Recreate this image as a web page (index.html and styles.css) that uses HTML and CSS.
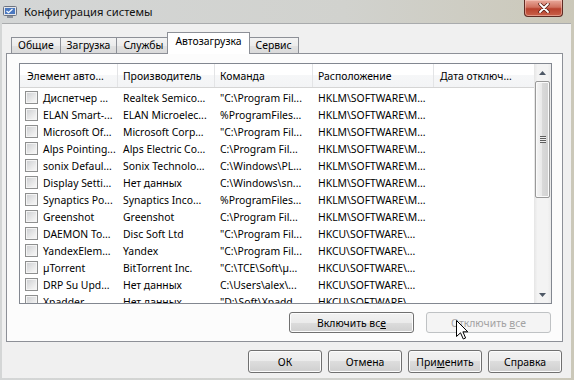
FILE: index.html
```html
<!DOCTYPE html>
<html lang="ru">

<head>
  <meta charset="UTF-8">
  <title>Конфигурация системы</title>
  <link rel="stylesheet" href="styles.css">
</head>

<body>
  <div class="window">
    <div class="titlebar">
      <svg class="titlebar__icon" width="14" height="14" viewBox="0 0 14 14">
        <rect x="0.5" y="1.5" width="13" height="9" rx="1" fill="#e4e6ea" stroke="#6d7380" />
        <rect x="2" y="3" width="10" height="6" fill="#4a78c0" />
        <path d="M3.5 6 L5.5 7.8 L9.5 4" fill="none" stroke="#ffffff" stroke-width="1.2" />
        <rect x="4" y="11" width="6" height="2" fill="#8a909a" />
      </svg>
      <span class="titlebar__text">Конфигурация системы</span>
      <div class="titlebar__close">
        <svg width="12" height="10" viewBox="0 0 12 10">
          <path d="M2 1 L10 9 M10 1 L2 9" stroke="#5a1e16" stroke-width="3.4" stroke-linecap="round" />
          <path d="M2 1 L10 9 M10 1 L2 9" stroke="#ffffff" stroke-width="1.8" stroke-linecap="round" />
        </svg>
      </div>
    </div>

    <div class="client">
      <div class="tabs">
        <div class="tab">Общие</div>
        <div class="tab">Загрузка</div>
        <div class="tab">Службы</div>
        <div class="tab tab--active">Автозагрузка</div>
        <div class="tab">Сервис</div>
      </div>

      <div class="tab-page">
        <div class="listview">
          <div class="listview__main">
            <div class="listview__header">
              <div class="col col--name">Элемент авто...</div>
              <div class="col col--maker">Производитель</div>
              <div class="col col--cmd">Команда</div>
              <div class="col col--place">Расположение</div>
              <div class="col col--date">Дата отключ...</div>
            </div>
            <div class="listview__rows">
              <div class="row">
                <div class="col col--name"><span class="check"></span>Диспетчер ...</div>
                <div class="col col--maker">Realtek Semico...</div>
                <div class="col col--cmd">"C:\Program Fil...</div>
                <div class="col col--place">HKLM\SOFTWARE\M...</div>
              </div>
              <div class="row">
                <div class="col col--name"><span class="check"></span>ELAN Smart-...</div>
                <div class="col col--maker">ELAN Microelec...</div>
                <div class="col col--cmd">%ProgramFiles...</div>
                <div class="col col--place">HKLM\SOFTWARE\M...</div>
              </div>
              <div class="row">
                <div class="col col--name"><span class="check"></span>Microsoft Of...</div>
                <div class="col col--maker">Microsoft Corp...</div>
                <div class="col col--cmd">"C:\Program Fil...</div>
                <div class="col col--place">HKLM\SOFTWARE\M...</div>
              </div>
              <div class="row">
                <div class="col col--name"><span class="check"></span>Alps Pointing...</div>
                <div class="col col--maker">Alps Electric Co...</div>
                <div class="col col--cmd">C:\Program Fil...</div>
                <div class="col col--place">HKLM\SOFTWARE\M...</div>
              </div>
              <div class="row">
                <div class="col col--name"><span class="check"></span>sonix Defaul...</div>
                <div class="col col--maker">Sonix Technolo...</div>
                <div class="col col--cmd">C:\Windows\PL...</div>
                <div class="col col--place">HKLM\SOFTWARE\M...</div>
              </div>
              <div class="row">
                <div class="col col--name"><span class="check"></span>Display Setti...</div>
                <div class="col col--maker">Нет данных</div>
                <div class="col col--cmd">C:\Windows\sn...</div>
                <div class="col col--place">HKLM\SOFTWARE\M...</div>
              </div>
              <div class="row">
                <div class="col col--name"><span class="check"></span>Synaptics Po...</div>
                <div class="col col--maker">Synaptics Inco...</div>
                <div class="col col--cmd">%ProgramFiles...</div>
                <div class="col col--place">HKLM\SOFTWARE\M...</div>
              </div>
              <div class="row">
                <div class="col col--name"><span class="check"></span>Greenshot</div>
                <div class="col col--maker">Greenshot</div>
                <div class="col col--cmd">C:\Program Fil...</div>
                <div class="col col--place">HKLM\SOFTWARE\M...</div>
              </div>
              <div class="row">
                <div class="col col--name"><span class="check"></span>DAEMON To...</div>
                <div class="col col--maker">Disc Soft Ltd</div>
                <div class="col col--cmd">"C:\Program Fil...</div>
                <div class="col col--place">HKCU\SOFTWARE\...</div>
              </div>
              <div class="row">
                <div class="col col--name"><span class="check"></span>YandexElem...</div>
                <div class="col col--maker">Yandex</div>
                <div class="col col--cmd">"C:\Program Fil...</div>
                <div class="col col--place">HKCU\SOFTWARE\...</div>
              </div>
              <div class="row">
                <div class="col col--name"><span class="check"></span>µTorrent</div>
                <div class="col col--maker">BitTorrent Inc.</div>
                <div class="col col--cmd">"C:\TCE\Soft\µ...</div>
                <div class="col col--place">HKCU\SOFTWARE\...</div>
              </div>
              <div class="row">
                <div class="col col--name"><span class="check"></span>DRP Su Upd...</div>
                <div class="col col--maker">Нет данных</div>
                <div class="col col--cmd">C:\Users\alex\...</div>
                <div class="col col--place">HKCU\SOFTWARE\...</div>
              </div>
              <div class="row">
                <div class="col col--name"><span class="check"></span>Xpadder</div>
                <div class="col col--maker">Нет данных</div>
                <div class="col col--cmd">"D:\Soft\Xpadd...</div>
                <div class="col col--place">HKCU\SOFTWARE\...</div>
              </div>
            </div>
          </div>

          <div class="scrollbar">
            <div class="scrollbar__arrow">
              <svg width="7" height="4" viewBox="0 0 7 4"><path d="M0 4 L3.5 0 L7 4 Z" fill="#4e5866" /></svg>
            </div>
            <div class="scrollbar__track">
              <div class="scrollbar__thumb">
                <span class="scrollbar__grip"></span>
              </div>
            </div>
            <div class="scrollbar__arrow">
              <svg width="7" height="4" viewBox="0 0 7 4"><path d="M0 0 L7 0 L3.5 4 Z" fill="#4e5866" /></svg>
            </div>
          </div>
        </div>

        <div class="page-buttons">
          <button class="btn btn--wide">Включить вс<u>е</u></button>
          <button class="btn btn--wide btn--disabled">Отключить <u>в</u>се</button>
        </div>
      </div>

      <div class="dialog-buttons">
        <button class="btn">ОК</button>
        <button class="btn">Отмена</button>
        <button class="btn">При<u>м</u>енить</button>
        <button class="btn">Справка</button>
      </div>
    </div>

    <svg class="cursor" width="13" height="20" viewBox="0 0 13 20">
      <path d="M0.5 0.5 L0.5 16.5 L4.5 12.8 L7.3 19 L9.6 18 L6.9 11.8 L11.8 11.8 Z" fill="#ffffff" stroke="#000000" stroke-width="1" stroke-linejoin="miter" />
    </svg>
  </div>
</body>

</html>
```

FILE: styles.css
```css
* {
  box-sizing: border-box;
}

html,
body {
  margin: 0;
  padding: 0;
}

body {
  width: 574px;
  height: 380px;
  overflow: hidden;
  font-family: "Noto Sans", "Open Sans", sans-serif;
  font-size: 10.4px;
  color: #000;
}

.window {
  position: relative;
  display: flex;
  flex-direction: column;
  width: 574px;
  height: 380px;
  padding: 0 3px 3px 2px;
  background: linear-gradient(to right, #d4d6d6, #d1d2ce 60%, #cbc8b9);
}

/* title bar */
.titlebar {
  display: flex;
  align-items: center;
  height: 23px;
  flex-shrink: 0;
}

.titlebar__icon {
  margin: 0 7px 0 1px;
}

.titlebar__text {
  font-size: 11.2px;
  color: #111;
  margin-top: -1px;
}

.titlebar__close {
  display: flex;
  align-items: center;
  justify-content: center;
  align-self: flex-start;
  margin-left: auto;
  margin-right: 8px;
  width: 39px;
  height: 17px;
  border: 1px solid #5e2a22;
  border-top: none;
  border-radius: 0 0 4px 4px;
  background: linear-gradient(to bottom, #e9a99b, #d0715f 45%, #b8412d 55%, #c9614a);
  box-shadow: inset 0 0 0 1px rgba(255, 220, 210, 0.45);
}

/* client */
.client {
  flex: 1;
  display: flex;
  flex-direction: column;
  padding: 8px 8px 5px 4px;
  background: #f0f0f0;
  border-top: 1px solid #a9abad;
}

/* tabs */
.tabs {
  display: flex;
  align-items: flex-end;
  height: 21px;
  padding-left: 5px;
  flex-shrink: 0;
}

.tab {
  height: 16px;
  line-height: 14px;
  padding: 0 6px;
  border: 1px solid #8d9097;
  border-bottom: none;
  margin-right: -1px;
  background: linear-gradient(to bottom, #f3f3f3, #ececec 50%, #e2e2e2 50%, #dadada);
  color: #000;
}

.tab--active {
  position: relative;
  z-index: 1;
  height: 22px;
  line-height: 17px;
  margin: 0 -1px -1px -2px;
  padding: 0 7px;
  background: #fff;
}

/* tab page */
.tab-page {
  display: flex;
  flex-direction: column;
  height: 289px;
  padding: 9px 10px 8px 12px;
  border: 1px solid #8d9097;
  background: #fcfcfc;
  flex-shrink: 0;
}

/* list view */
.listview {
  display: flex;
  height: 241px;
  border: 1px solid #828790;
  background: #fff;
  overflow: hidden;
}

.listview__main {
  flex: 1;
  overflow: hidden;
}

.listview__header {
  display: flex;
  height: 24px;
  align-items: center;
  background: linear-gradient(to bottom, #ffffff, #ffffff 50%, #f6f7f8 50%, #f3f4f6);
  border-bottom: 1px solid #d5d5d5;
}

.listview__header .col {
  height: 100%;
  line-height: 24px;
  padding-left: 7px;
  border-right: 1px solid #e3e4e6;
}

.listview__header .col--maker,
.listview__header .col--cmd,
.listview__header .col--place {
  padding-left: 5px;
}

.listview__header .col--date {
  padding-left: 6px;
  border-right: none;
}

.listview__rows {
  padding-top: 1px;
}

.row {
  display: flex;
  height: 17px;
  align-items: center;
}

.col {
  white-space: nowrap;
  overflow: hidden;
  padding-left: 5px;
}

.col--name {
  display: flex;
  align-items: center;
  width: 98px;
}

.col--maker {
  width: 97px;
}

.col--cmd {
  width: 98px;
}

.col--place {
  width: 121px;
}

.col--date {
  flex: 1;
}

.check {
  flex-shrink: 0;
  width: 13px;
  height: 13px;
  margin-right: 5px;
  border: 1px solid #8e8f8f;
  background: linear-gradient(135deg, #cbcdd0, #eeeeee 70%, #f8f8f8);
  box-shadow: inset 0 0 0 1px #f4f4f4;
}

/* scrollbar */
.scrollbar {
  display: flex;
  flex-direction: column;
  width: 17px;
  flex-shrink: 0;
  background: linear-gradient(to right, #e5e5e5, #f3f3f3 20%, #f3f3f3 80%, #eaeaea);
}

.scrollbar__arrow {
  display: flex;
  align-items: center;
  justify-content: center;
  height: 17px;
  flex-shrink: 0;
}

.scrollbar__track {
  flex: 1;
}

.scrollbar__thumb {
  display: flex;
  align-items: center;
  justify-content: center;
  height: 117px;
  margin: 0 1px;
  border: 1px solid #999;
  border-radius: 2px;
  background: linear-gradient(to right, #f4f4f4, #e8e8e8 50%, #d9d9d9 50%, #d1d1d1);
  box-shadow: inset 0 0 0 1px #fafafa;
}

.scrollbar__grip {
  width: 6px;
  height: 7px;
  background: repeating-linear-gradient(to bottom, #5d5d5d 0, #5d5d5d 1px, #eeeeee 1px, #eeeeee 2px);
}

/* buttons */
.page-buttons {
  display: flex;
  justify-content: flex-end;
  gap: 12px;
  margin-top: 8px;
  margin-right: 1px;
}

.dialog-buttons {
  display: flex;
  justify-content: flex-end;
  gap: 6px;
  margin-top: 8px;
  margin-right: 1px;
}

.btn {
  width: 74px;
  height: 23px;
  padding: 0;
  border: 1px solid #707070;
  border-radius: 3px;
  background: linear-gradient(to bottom, #f2f2f2, #ebebeb 50%, #dddddd 50%, #cfcfcf);
  box-shadow: inset 0 0 0 1px #fcfcfc;
  font-family: inherit;
  font-size: 10.4px;
  color: #000;
}

.btn--wide {
  width: 125px;
  height: 21px;
}

.btn--disabled {
  border-color: #bfc2c4;
  background: #f4f4f4;
  color: #a2a2a2;
  box-shadow: none;
}

.cursor {
  position: absolute;
  left: 456px;
  top: 320px;
}
```
